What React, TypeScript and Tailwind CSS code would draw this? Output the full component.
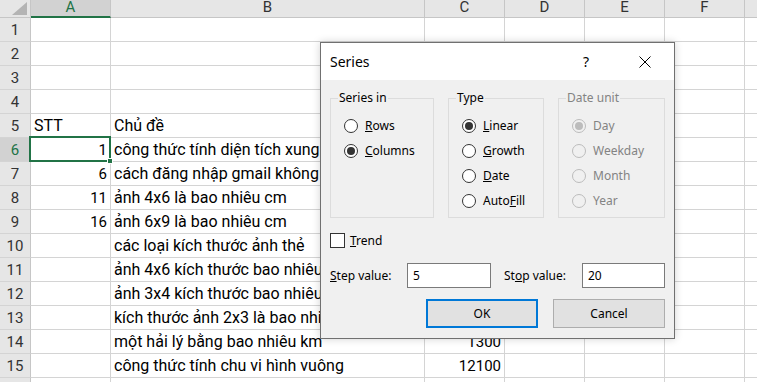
import type { ReactNode } from "react"
import clsx from "clsx"

const COLS = [
    { key: "A", w: "w-[80px]" },
    { key: "B", w: "w-[314px]" },
    { key: "C", w: "w-[80px]" },
    { key: "D", w: "w-[80px]" },
    { key: "E", w: "w-[80px]" },
    { key: "F", w: "w-[80px]" },
]

type Row = { a?: string; b?: string; c?: string }

const ROWS: Row[] = [
    {},
    {},
    {},
    {},
    { a: "STT", b: "Chủ đề" },
    { a: "1", b: "công thức tính diện tích xung quanh hình trụ" },
    { a: "6", b: "cách đăng nhập gmail không cần số điện thoại" },
    { a: "11", b: "ảnh 4x6 là bao nhiêu cm" },
    { a: "16", b: "ảnh 6x9 là bao nhiêu cm" },
    { b: "các loại kích thước ảnh thẻ" },
    { b: "ảnh 4x6 kích thước bao nhiêu" },
    { b: "ảnh 3x4 kích thước bao nhiêu" },
    { b: "kích thước ảnh 2x3 là bao nhiêu" },
    { b: "một hải lý bằng bao nhiêu km", c: "1300" },
    { b: "công thức tính chu vi hình vuông", c: "12100" },
    {},
]

const isNum = (v?: string) => !!v && /^\d+$/.test(v)

function Sheet() {
    return (
        <div className="font-['Roboto',sans-serif] text-[15px] text-black">
            {/* Column headers */}
            <div className="flex h-[18px] bg-[#e6e6e6] text-[#333] leading-[12px]">
                <div className="relative w-[31px] shrink-0 border-r border-b border-[#c6c6c6]">
                    <svg className="absolute left-[12px] top-[2px]" width="15" height="13" viewBox="0 0 15 13">
                        <polygon points="15,0 15,13 0,13" fill="#b4b4b4" />
                    </svg>
                </div>
                {COLS.map((c) => (
                    <div
                        key={c.key}
                        className={clsx(
                            "flex shrink-0 justify-center border-r border-[#c6c6c6] pt-[1px]",
                            c.w,
                            c.key === "A" ? "border-b-2 border-b-[#217346] bg-[#d2d2d2] text-[#217346]" : "border-b"
                        )}
                    >
                        {c.key}
                    </div>
                ))}
                <div className="flex-1 border-b border-[#c6c6c6]" />
            </div>

            {/* Rows */}
            {ROWS.map((r, i) => (
                <div key={i} className="flex h-[24px] leading-[18px]">
                    <div
                        className={clsx(
                            "flex w-[31px] shrink-0 items-end justify-center border-r border-b border-r-[#c6c6c6] border-b-[#d4d4d4] pb-[2px]",
                            i === 5 ? "bg-[#d2d2d2] text-[#217346]" : "bg-[#e6e6e6] text-[#333]"
                        )}
                    >
                        {i + 1}
                    </div>
                    <div className="flex w-[80px] shrink-0 items-end border-r border-b border-[#d4d4d4] pb-[2px] px-[3px]">
                        <span className={clsx("w-full", isNum(r.a) ? "text-right" : "text-left text-[16px]")}>{r.a}</span>
                    </div>
                    <div className="flex w-[314px] shrink-0 items-end overflow-hidden whitespace-nowrap border-r border-b border-[#d4d4d4] pb-[2px] pl-[3px] text-[16px]">
                        {r.b}
                    </div>
                    <div className="flex w-[80px] shrink-0 items-end justify-end border-r border-b border-[#d4d4d4] pb-[2px] pr-[3px]">
                        {r.c}
                    </div>
                    <div className="w-[80px] shrink-0 border-r border-b border-[#d4d4d4]" />
                    <div className="w-[80px] shrink-0 border-r border-b border-[#d4d4d4]" />
                    <div className="w-[80px] shrink-0 border-r border-b border-[#d4d4d4]" />
                    <div className="flex-1 border-b border-[#d4d4d4]" />
                </div>
            ))}
        </div>
    )
}

function Radio({ checked = false, disabled = false, children }: { checked?: boolean; disabled?: boolean; children: ReactNode }) {
    return (
        <div className="flex h-[25px] items-center gap-[7px] pl-[6px]">
            <span
                className={clsx(
                    "flex h-[14px] w-[14px] items-center justify-center rounded-full border",
                    disabled ? "border-[#bcbcbc] bg-[#f0f0f0]" : "border-[#333] bg-white"
                )}
            >
                {checked && <span className={clsx("h-[8px] w-[8px] rounded-full", disabled ? "bg-[#bcbcbc]" : "bg-[#333]")} />}
            </span>
            <span className={disabled ? "text-[#838383]" : "text-black"}>{children}</span>
        </div>
    )
}

function Group({ title, w, disabled = false, children }: { title: string; w: string; disabled?: boolean; children: ReactNode }) {
    return (
        <fieldset className={clsx("h-[128px] shrink-0 border border-[#dcdcdc] pl-[7px] pt-[7px]", w)}>
            <legend className={clsx("px-[1px] leading-[16px]", disabled ? "text-[#838383]" : "text-black")}>{title}</legend>
            {children}
        </fieldset>
    )
}

function SeriesDialog() {
    return (
        <div className="absolute left-[320px] top-[42px] flex h-[297px] w-[355px] flex-col border border-[#707070] bg-[#f0f0f0] font-['Noto_Sans',sans-serif] text-[12px] leading-[16px] text-black shadow-[0_0_8px_rgba(0,0,0,0.18)]">
            {/* Title bar */}
            <div className="flex h-[37px] shrink-0 items-center bg-white pl-[9px] pr-[23px] text-[14px]">
                <span>Series</span>
                <span className="ml-auto">?</span>
                <svg className="ml-[50px]" width="12" height="12" viewBox="0 0 12 12">
                    <path d="M0.5 0.5 L11.5 11.5 M11.5 0.5 L0.5 11.5" stroke="#000" strokeWidth="1" />
                </svg>
            </div>

            {/* Body */}
            <div className="flex flex-1 flex-col px-[9px] pt-[10px]">
                <div className="flex gap-[14px]">
                    <Group title="Series in" w="w-[104px]">
                        <Radio><u>R</u>ows</Radio>
                        <Radio checked><u>C</u>olumns</Radio>
                    </Group>
                    <Group title="Type" w="w-[96px]">
                        <Radio checked><u>L</u>inear</Radio>
                        <Radio><u>G</u>rowth</Radio>
                        <Radio><u>D</u>ate</Radio>
                        <Radio>Auto<u>F</u>ill</Radio>
                    </Group>
                    <Group title="Date unit" w="w-[107px]" disabled>
                        <Radio checked disabled>Day</Radio>
                        <Radio disabled>Weekday</Radio>
                        <Radio disabled>Month</Radio>
                        <Radio disabled>Year</Radio>
                    </Group>
                </div>

                <div className="mt-[15px] flex h-[15px] items-center gap-[5px]">
                    <span className="h-[15px] w-[15px] border border-[#333] bg-white" />
                    <span><u>T</u>rend</span>
                </div>

                <div className="mt-[15px] flex h-[25px] items-center">
                    <span className="w-[77px]"><u>S</u>tep value:</span>
                    <div className="flex h-[25px] w-[84px] items-center border border-[#7a7a7a] bg-white pl-[5px]">5</div>
                    <span className="ml-[13px] w-[78px]">St<u>o</u>p value:</span>
                    <div className="flex h-[25px] w-[83px] items-center border border-[#7a7a7a] bg-white pl-[5px]">20</div>
                </div>

                <div className="mt-[11px] flex justify-end gap-[15px]">
                    <button className="flex h-[29px] w-[112px] items-center justify-center border-2 border-[#0078d7] bg-[#e1e1e1]">OK</button>
                    <button className="flex h-[29px] w-[112px] items-center justify-center border border-[#adadad] bg-[#e1e1e1]">Cancel</button>
                </div>
            </div>
        </div>
    )
}

export default function App() {
    return (
        <div className="relative h-[382px] w-[757px] overflow-hidden bg-white">
            <Sheet />

            {/* Active cell A6 */}
            <div className="absolute left-[29px] top-[136px] h-[26px] w-[82px] border-2 border-[#217346]" />
            <div className="absolute left-[107px] top-[158px] h-[6px] w-[6px] border border-white bg-[#217346]" />

            <SeriesDialog />
        </div>
    )
}
